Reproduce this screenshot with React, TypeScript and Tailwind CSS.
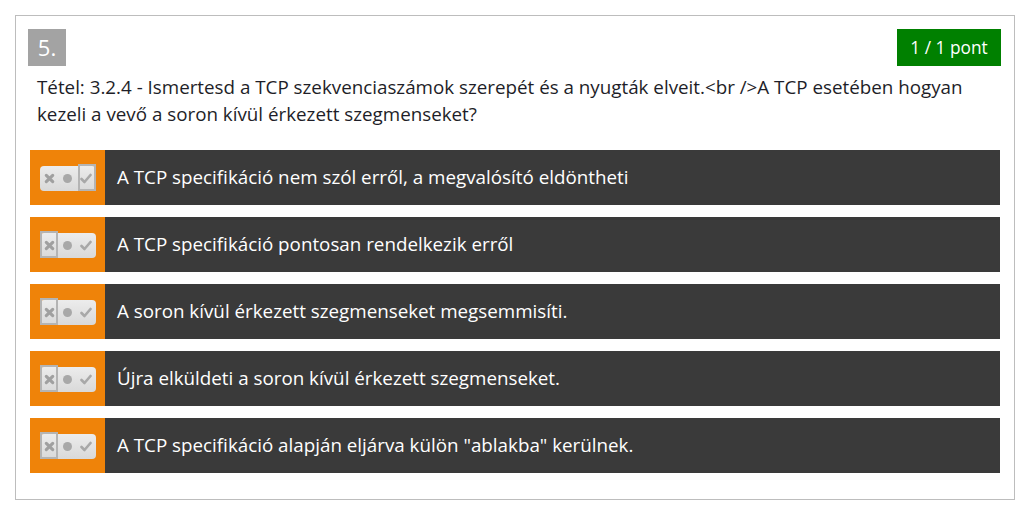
import React from 'react';

type Option = { text: string; state: 'yes' | 'no' };

const options: Option[] = [
  { text: 'A TCP specifikáció nem szól erről, a megvalósító eldöntheti', state: 'yes' },
  { text: 'A TCP specifikáció pontosan rendelkezik erről', state: 'no' },
  { text: 'A soron kívül érkezett szegmenseket megsemmisíti.', state: 'no' },
  { text: 'Újra elküldeti a soron kívül érkezett szegmenseket.', state: 'no' },
  { text: 'A TCP specifikáció alapján eljárva külön "ablakba" kerülnek.', state: 'no' },
];

const Cross = () => (
  <svg width="11" height="11" viewBox="0 0 12 12">
    <path d="M2.5 2.5 L9.5 9.5 M9.5 2.5 L2.5 9.5" stroke="#a0a0a0" strokeWidth="3.4" strokeLinecap="round" />
  </svg>
);

const Check = () => (
  <svg width="12" height="11" viewBox="0 0 12 11">
    <path d="M1.5 6 L4.5 9 L10.5 2" stroke="#a8a8a8" strokeWidth="2.6" fill="none" strokeLinecap="round" strokeLinejoin="round" />
  </svg>
);

const Toggle = ({ state }: { state: 'yes' | 'no' }) => (
  <div className="relative flex h-[25px] w-[56px] items-center rounded-[4px] bg-gradient-to-b from-[#ececec] to-[#d9d9d9]">
    <div className="flex w-[19px] justify-center">
      <Cross />
    </div>
    <div className="flex w-[18px] justify-center">
      <div className="h-[9px] w-[9px] rounded-full bg-[#a8a8a8]" />
    </div>
    <div className="flex w-[19px] justify-center">
      <Check />
    </div>
    {/* kijelölt cella keret */}
    <div
      className={
        'absolute top-[-2px] h-[27px] w-[18px] border-2 border-[#b4b4b4] ' +
        (state === 'yes' ? 'right-0' : 'left-0')
      }
    />
  </div>
);

export default function App() {
  return (
    <div className="min-h-[509px] bg-white pl-[15px] pt-[15px] font-['Open_Sans',sans-serif]">
      <div className="h-[485px] w-[1000px] border border-[#bdbdbd] px-[14px] pt-[13px]">
        {/* fejléc */}
        <div className="-mr-px flex items-start justify-between">
          <div className="-ml-[2px] flex h-[37px] w-[38px] items-center justify-center bg-[#a3a3a3] text-[22px] text-white">
            5.
          </div>
          <div className="flex h-[37px] w-[104px] items-center justify-center bg-[#008000] text-[17.3px] text-white">
            1 / 1 pont
          </div>
        </div>

        <p className="mt-[8px] pl-[7px] text-[18.8px] leading-[27px] text-[#1e1e28]">
          Tétel: 3.2.4 - Ismertesd a TCP szekvenciaszámok szerepét és a nyugták elveit.&lt;br /&gt;A TCP esetében hogyan
          kezeli a vevő a soron kívül érkezett szegmenseket?
        </p>

        <div className="mt-[22px] flex flex-col gap-[12px]">
          {options.map((o) => (
            <div key={o.text} className="flex h-[55px]">
              <div className="flex w-[75px] items-center justify-center bg-[#ef8309] pt-px">
                <Toggle state={o.state} />
              </div>
              <div className="flex flex-1 items-center bg-[#3a3a3a] pl-[12px] pb-px text-[18.8px] text-white">
                {o.text}
              </div>
            </div>
          ))}
        </div>
      </div>
    </div>
  );
}
